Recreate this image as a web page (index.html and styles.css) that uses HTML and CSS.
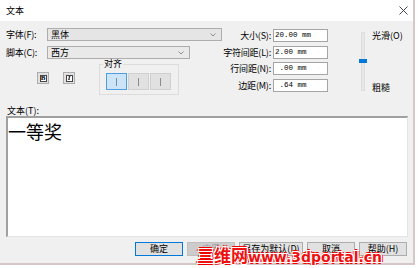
FILE: index.html
```html
<!DOCTYPE html>
<html lang="zh-CN">
<head>
    <meta charset="UTF-8">
    <title>文本</title>
    <link rel="stylesheet" href="styles.css">
</head>
<body>
    <div class="window">
        <div class="titlebar">
            <span class="title">文本</span>
            <svg class="close" width="9" height="9" viewBox="0 0 9 9">
                <path d="M0.5 0.5 L8.5 8.5 M8.5 0.5 L0.5 8.5" stroke="#333" stroke-width="0.9" fill="none"/>
            </svg>
        </div>
        <div class="body">
            <div class="top">
                <div class="left">
                    <div class="row">
                        <span class="label">字体(F):</span>
                        <div class="select font-select">
                            <span>黑体</span>
                            <svg width="6" height="4" viewBox="0 0 6 4"><path d="M0.5 0.5 L3 3 L5.5 0.5" stroke="#777" stroke-width="0.8" fill="none"/></svg>
                        </div>
                    </div>
                    <div class="row">
                        <span class="label">脚本(C):</span>
                        <div class="select script-select">
                            <span>西方</span>
                            <svg width="6" height="4" viewBox="0 0 6 4"><path d="M0.5 0.5 L3 3 L5.5 0.5" stroke="#777" stroke-width="0.8" fill="none"/></svg>
                        </div>
                    </div>
                    <div class="format">
                        <div class="tool bold"><span>B</span></div>
                        <div class="tool italic"><span>I</span></div>
                        <div class="group">
                            <span class="legend">对齐</span>
                            <div class="align-btn active"><i></i></div>
                            <div class="align-btn"><i></i></div>
                            <div class="align-btn"><i></i></div>
                        </div>
                    </div>
                </div>
                <div class="fields">
                    <div class="field"><span class="label">大小(S):</span><div class="input">20.00 mm</div></div>
                    <div class="field"><span class="label">字符间距(L):</span><div class="input">2.00 mm</div></div>
                    <div class="field"><span class="label">行间距(N):</span><div class="input"> .00 mm</div></div>
                    <div class="field"><span class="label">边距(M):</span><div class="input"> .64 mm</div></div>
                </div>
                <div class="smooth">
                    <div class="track"><div class="thumb"></div></div>
                    <div class="smooth-labels">
                        <span>光滑(O)</span>
                        <span>粗糙</span>
                    </div>
                </div>
            </div>
            <div class="text-label">文本(T):</div>
            <div class="textbox">一等奖</div>
            <div class="buttons">
                <div class="btn default">确定</div>
                <div class="btn disabled">应用</div>
                <div class="btn wide">另存为默认(D)</div>
                <div class="btn">取消</div>
                <div class="btn">帮助(H)</div>
            </div>
        </div>
        <div class="watermark"><span class="wm-cn">三维网</span><span class="wm-en">www.3dportal.cn</span></div>
    </div>
</body>
</html>
```

FILE: styles.css
```css
body {
    margin: 0;
    background: #fff;
    font-family: "Noto Sans CJK SC", sans-serif;
    font-size: 9px;
    color: #000;
}
.window {
    position: relative;
    width: 413px;
    height: 263px;
    border-right: 2px solid #d6c8c8;
    border-bottom: 2px solid #d6c8c8;
    background: #f0f0f0;
}
.titlebar {
    height: 21px;
    background: #fff;
    display: flex;
    align-items: center;
    justify-content: space-between;
    padding: 0 5px 0 6px;
}
.title {
    line-height: 12px;
}
.close {
    margin-top: -1px;
}
.body {
    padding-left: 6px;
}
.top {
    height: 84px;
    display: flex;
}
.left {
    width: 206px;
    padding-top: 7px;
}
.row {
    display: flex;
    align-items: center;
    height: 13px;
    margin-bottom: 5px;
}
.row .label {
    width: 41px;
    flex-shrink: 0;
    white-space: nowrap;
    letter-spacing: -0.2px;
    line-height: 13px;
}
.select {
    box-sizing: border-box;
    height: 13px;
    border: 1px solid #adadad;
    background: #e5e5e5;
    display: flex;
    align-items: center;
    justify-content: space-between;
    padding: 0 5px 0 3px;
    line-height: 11px;
}
.font-select {
    width: 175px;
    flex-shrink: 0;
}
.script-select {
    width: 143px;
    background: #e9e9e9;
}
.format {
    display: flex;
    align-items: flex-start;
    margin-top: 5px;
}
.tool {
    box-sizing: border-box;
    width: 12px;
    height: 12px;
    margin-top: 8px;
    border: 1px solid #adadad;
    background: #e1e1e1;
    display: flex;
    align-items: center;
    justify-content: center;
}
.tool span {
    box-sizing: border-box;
    width: 7px;
    height: 7px;
    border: 1px solid #444;
    background: #fff;
    font-family: "Liberation Serif", serif;
    font-size: 7px;
    line-height: 5px;
    text-align: center;
}
.bold {
    margin-left: 31px;
}
.bold span {
    font-weight: bold;
}
.italic {
    margin-left: 14px;
}
.italic span {
    font-style: italic;
    font-weight: bold;
}
.group {
    position: relative;
    box-sizing: border-box;
    width: 80px;
    height: 31px;
    margin-left: 24px;
    border: 1px solid #dcdcdc;
    padding: 8px 0 0 6px;
    display: flex;
    gap: 1px;
}
.legend {
    position: absolute;
    left: 3px;
    top: -6px;
    padding: 0 1px;
    background: #f0f0f0;
    line-height: 10px;
}
.align-btn {
    box-sizing: border-box;
    width: 21px;
    height: 17px;
    border: 1px solid #d0d0d0;
    background: #e1e1e1;
    display: flex;
    align-items: center;
    justify-content: center;
}
.align-btn i {
    width: 1px;
    height: 8px;
    background: #8a8a8a;
}
.align-btn.active {
    border-color: #4f9ee0;
    background: #cce4f7;
}
.align-btn.active i {
    background: #7a8a9a;
}
.fields {
    width: 116px;
    padding-top: 8px;
    display: flex;
    flex-direction: column;
    gap: 3.5px;
}
.field {
    display: flex;
    align-items: center;
    height: 13px;
}
.field .label {
    width: 59px;
    text-align: right;
    white-space: nowrap;
    letter-spacing: -0.2px;
    line-height: 13px;
}
.input {
    box-sizing: border-box;
    width: 55px;
    height: 13px;
    margin-left: 2px;
    border: 1px solid #a5a5a5;
    background: #fff;
    padding-left: 1px;
    font-family: "Liberation Mono", monospace;
    font-size: 7.5px;
    line-height: 11px;
    white-space: pre;
}
.smooth {
    display: flex;
}
.track {
    position: relative;
    box-sizing: border-box;
    width: 4px;
    height: 59px;
    margin: 11px 0 0 33px;
    background: #e7e7e7;
    border: 1px solid #dedede;
}
.thumb {
    position: absolute;
    left: -3px;
    top: 26px;
    width: 8px;
    height: 4px;
    background: #0078d7;
}
.smooth-labels {
    display: flex;
    flex-direction: column;
    justify-content: space-between;
    height: 62px;
    margin: 10px 0 0 7px;
    line-height: 10px;
}
.text-label {
    line-height: 11px;
    padding-left: 1px;
}
.textbox {
    box-sizing: border-box;
    width: 402px;
    height: 121px;
    border-top: 2px solid #a0a0a0;
    border-left: 2px solid #a0a0a0;
    border-right: 1px solid #e3e3e3;
    border-bottom: 1px solid #e3e3e3;
    background: #fff;
    padding-top: 3px;
    font-size: 18px;
    line-height: 20px;
}
.buttons {
    display: flex;
    justify-content: flex-end;
    gap: 4px;
    margin-top: 5px;
    width: 401px;
}
.btn {
    box-sizing: border-box;
    width: 48px;
    height: 14px;
    border: 1px solid #adadad;
    background: #e1e1e1;
    text-align: center;
    line-height: 12px;
}
.btn.wide {
    width: 64px;
}
.btn.default {
    border-color: #0078d7;
}
.btn.disabled {
    border-color: #bfbfbf;
    background: #cccccc;
    color: #a0a0a0;
}
.watermark {
    position: absolute;
    left: 197px;
    top: 246px;
    display: flex;
    align-items: baseline;
    color: #ee1111;
    font-weight: bold;
    white-space: nowrap;
    text-shadow: 1px 0 #fff, -1px 0 #fff, 0 1px #fff, 0 -1px #fff, 1px 1px #fff, -1px -1px #fff, 1px -1px #fff, -1px 1px #fff, 2px 0 #e00, -2px 0 #e00, 0 2px #e00, 0 -2px #e00;
}
.wm-cn {
    font-size: 17px;
    line-height: 18px;
}
.wm-en {
    font-family: "DejaVu Sans", sans-serif;
    font-size: 14px;
    line-height: 18px;
}
```
